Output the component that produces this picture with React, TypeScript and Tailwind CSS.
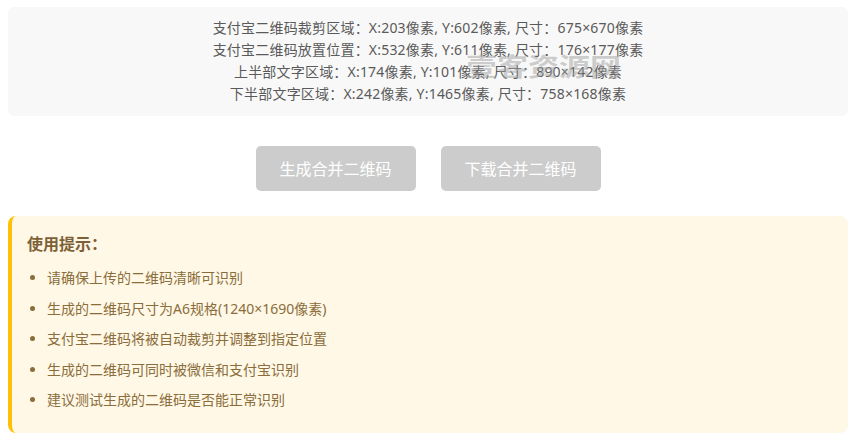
import React from "react";

const regions = [
  "支付宝二维码裁剪区域：X:203像素, Y:602像素, 尺寸：675×670像素",
  "支付宝二维码放置位置：X:532像素, Y:611像素, 尺寸：176×177像素",
  "上半部文字区域：X:174像素, Y:101像素, 尺寸：890×142像素",
  "下半部文字区域：X:242像素, Y:1465像素, 尺寸：758×168像素",
];

const tips = [
  "请确保上传的二维码清晰可识别",
  "生成的二维码尺寸为A6规格(1240×1690像素)",
  "支付宝二维码将被自动裁剪并调整到指定位置",
  "生成的二维码可同时被微信和支付宝识别",
  "建议测试生成的二维码是否能正常识别",
];

export default function App() {
  return (
    <div
      className="min-h-[443px] bg-white pl-2 pt-[7px]"
      style={{ fontFamily: '"Noto Sans", "Noto Sans CJK SC", sans-serif' }}
    >
      <div className="w-[840px]">
        {/* region summary */}
        <div className="relative rounded-md bg-[#f8f8f8] pt-[10px] pb-[11px] text-center text-[14px] leading-[22px] tracking-[0.2px] text-[#5a5a5a]">
          {regions.map((r) => (
            <div key={r}>{r}</div>
          ))}
          <span className="pointer-events-none absolute left-[458px] top-[44px] scale-y-[0.8] text-[31px] font-bold leading-none tracking-[0px] text-[#a0a0a0]/50">
            壹客资源网
          </span>
        </div>

        {/* actions */}
        <div className="flex justify-center gap-[25px] pt-[30px] pb-[25px]">
          <button className="h-[45px] w-[160px] rounded-[5px] bg-[#cccccc] text-[16px] text-white">
            生成合并二维码
          </button>
          <button className="h-[45px] w-[160px] rounded-[5px] bg-[#cccccc] text-[16px] text-white">
            下载合并二维码
          </button>
        </div>

        {/* usage tips */}
        <div className="h-[217px] rounded-lg border-l-4 border-[#ffc107] bg-[#fff8e6] pt-4 pl-[15px]">
          <div className="text-[16px] font-bold leading-6 text-[#7d6136]">使用提示：</div>
          <ul className="mt-[11px] list-disc pl-5 text-[14px] text-[#8a6d3b] marker:text-[#8a6d3b]">
            {tips.map((t) => (
              <li key={t} className="mb-2 leading-[22.5px]">
                {t}
              </li>
            ))}
          </ul>
        </div>
      </div>
    </div>
  );
}
